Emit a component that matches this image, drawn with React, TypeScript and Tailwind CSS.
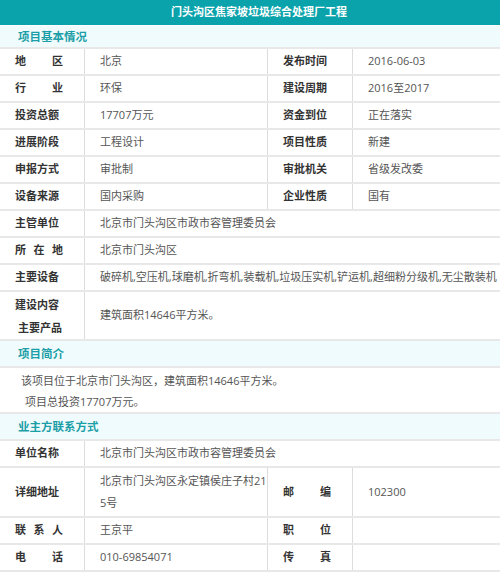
import type { ReactNode } from "react";

const line = "border-b-2 border-[#e8e8e8]";
const vline = "border-r border-[#dcdcdc]";

function Spaced({ text }: { text: string }) {
  return (
    <span className="flex w-[48px] justify-between">
      {text.split("").map((c, i) => (
        <span key={i}>{c}</span>
      ))}
    </span>
  );
}

function Label({ children, last }: { children: ReactNode; last?: boolean }) {
  return (
    <div className={`flex items-center pl-[15px] font-bold text-[#333] ${last ? "" : vline}`}>
      {children}
    </div>
  );
}

function Value({ children, wide, border }: { children: ReactNode; wide?: boolean; border?: boolean }) {
  return (
    <div
      className={`flex items-center pl-[15px] text-[#555] ${wide ? "col-span-3 whitespace-nowrap overflow-hidden" : ""} ${border ? vline : ""}`}
    >
      {children}
    </div>
  );
}

function Section({ title }: { title: string }) {
  return (
    <div className={`h-[27px] bg-[#effbfc] ${line} flex items-center pl-[18px] font-bold text-[#1b9ea7] text-[11.5px]`}>
      {title}
    </div>
  );
}

function Row({ children, h = "h-[27px]" }: { children: ReactNode; h?: string }) {
  return <div className={`grid grid-cols-[85px_183px_85px_1fr] ${h} ${line}`}>{children}</div>;
}

type Pair = [ReactNode, ReactNode, ReactNode, ReactNode];

const basic: Pair[] = [
  [<Spaced text="地区" />, "北京", "发布时间", "2016-06-03"],
  [<Spaced text="行业" />, "环保", "建设周期", "2016至2017"],
  ["投资总额", "17707万元", "资金到位", "正在落实"],
  ["进展阶段", "工程设计", "项目性质", "新建"],
  ["申报方式", "审批制", "审批机关", "省级发改委"],
  ["设备来源", "国内采购", "企业性质", "国有"],
];

export default function App() {
  return (
    <div className="w-[500px] bg-white text-[11px] font-['Open_Sans','Noto_Sans_CJK_SC',sans-serif]">
      {/* 标题 */}
      <div className="h-[25px] bg-[#0ba3ab] flex items-center justify-center pl-[18px] text-white font-bold text-[11px]">
        门头沟区焦家坡垃圾综合处理厂工程
      </div>
      <div className="h-[1px] bg-white" />
      <div className={`h-[23px] bg-[#effbfc] ${line} flex items-center pl-[18px] font-bold text-[#1b9ea7] text-[11.5px]`}>
        项目基本情况
      </div>

      {basic.map((r, i) => (
        <Row key={i}>
          <Label>{r[0]}</Label>
          <Value border>{r[1]}</Value>
          <Label>{r[2]}</Label>
          <Value>{r[3]}</Value>
        </Row>
      ))}

      <Row>
        <Label>主管单位</Label>
        <Value wide>北京市门头沟区市政市容管理委员会</Value>
      </Row>
      <Row>
        <Label>
          <Spaced text="所在地" />
        </Label>
        <Value wide>北京市门头沟区</Value>
      </Row>
      <Row>
        <Label>主要设备</Label>
        <Value wide>破碎机,空压机,球磨机,折弯机,装载机,垃圾压实机,铲运机,超细粉分级机,无尘散装机</Value>
      </Row>
      <Row h="h-[49px]">
        <Label>
          <div className="flex flex-col leading-[23px]">
            <span>建设内容</span>
            <span className="pl-[3px]">主要产品</span>
          </div>
        </Label>
        <Value wide>建筑面积14646平方米。</Value>
      </Row>

      <Section title="项目简介" />
      <div className={`h-[46px] ${line} pt-[2px] text-[#555] leading-[21px]`}>
        <div className="pl-[21px]">该项目位于北京市门头沟区，建筑面积14646平方米。</div>
        <div className="pl-[25px]">项目总投资17707万元。</div>
      </div>

      <Section title="业主方联系方式" />
      <Row>
        <Label>单位名称</Label>
        <Value wide>北京市门头沟区市政市容管理委员会</Value>
      </Row>
      <Row h="h-[50px]">
        <Label>详细地址</Label>
        <Value border>
          <div className="leading-[22px]">
            北京市门头沟区永定镇侯庄子村21
            <br />
            5号
          </div>
        </Value>
        <Label>
          <Spaced text="邮编" />
        </Label>
        <Value>102300</Value>
      </Row>
      <Row>
        <Label>
          <Spaced text="联系人" />
        </Label>
        <Value border>王京平</Value>
        <Label>
          <Spaced text="职位" />
        </Label>
        <Value>{""}</Value>
      </Row>
      <Row>
        <Label>
          <Spaced text="电话" />
        </Label>
        <Value border>010-69854071</Value>
        <Label>
          <Spaced text="传真" />
        </Label>
        <Value>{""}</Value>
      </Row>
    </div>
  );
}
